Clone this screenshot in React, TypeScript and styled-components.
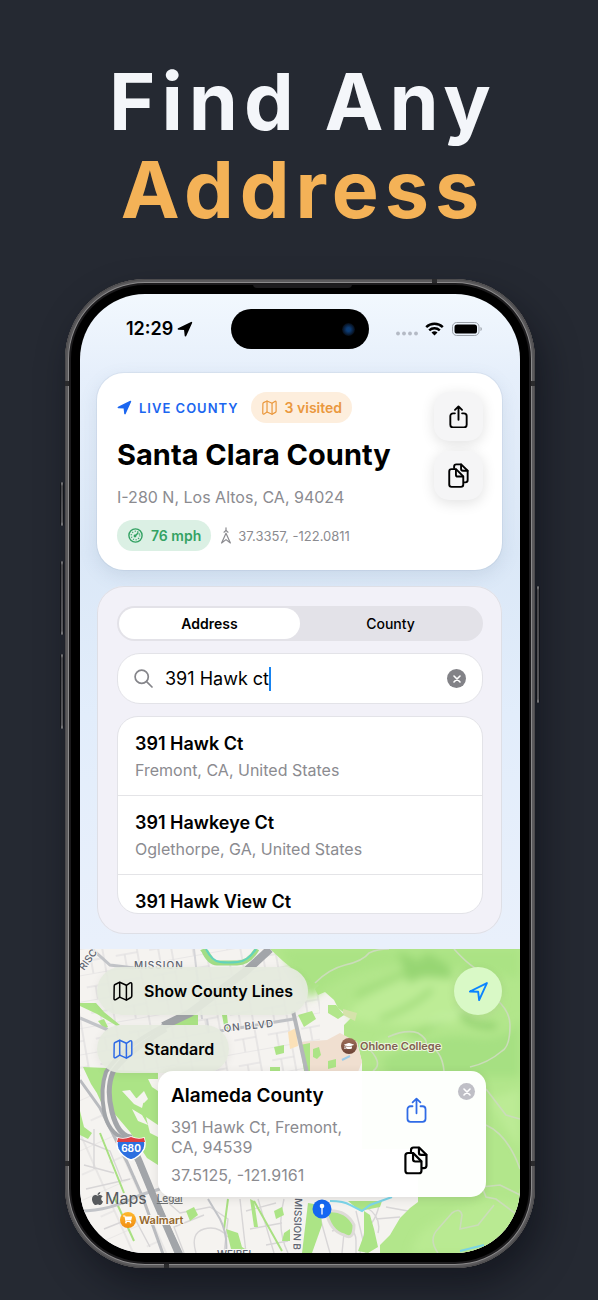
import React, { useState } from "react";
import styled, { createGlobalStyle, css } from "styled-components";
import { FaApple, FaGraduationCap, FaShoppingCart } from "react-icons/fa";

const GlobalStyle = createGlobalStyle`
  *, *::before, *::after { box-sizing: border-box; }
  body {
    margin: 0;
    background: #252932;
    font-family: Inter, "Liberation Sans", sans-serif;
    color: #000;
  }
  button, input { font: inherit; color: inherit; margin: 0; }
  h1, h2, h3, p, ul { margin: 0; padding: 0; font-weight: inherit; }
`;

/* ---------- Page and headline ---------- */

const Page = styled.main`
  display: flex;
  flex-direction: column;
  gap: 46px;
  padding: 57px 63px 32px 65px;
`;

const Headline = styled.h1`
  padding-left: 6px;
  color: #f4f6fa;
  font-size: 79px;
  font-weight: 700;
  line-height: 88px;
  letter-spacing: 6px;
  text-align: center;
  white-space: nowrap;
`;

const Accent = styled.span`
  display: block;
  color: #f4b257;
`;

/* ---------- Device ---------- */

const Device = styled.div`
  position: relative;
  padding: 15px;
  border-radius: 80px;
  background: #000;
  box-shadow:
    inset 0 0 0 1px #4c4b4d,
    inset 0 0 0 3px #5b5a5c,
    inset 0 0 0 4px #8b8a8b,
    inset 0 0 0 6px #1c1b1d,
    8px 18px 34px rgba(8, 10, 18, 0.5);
`;

const SideKey = styled.span<{ $side: "left" | "right"; $top: number; $length: number }>`
  position: absolute;
  ${({ $side }) => $side}: -5px;
  top: ${({ $top }) => $top}px;
  width: 4px;
  height: ${({ $length }) => $length}px;
  border-radius: 2px;
  background: linear-gradient(#98989b, #47474b 4px, #58585c calc(100% - 4px), #98989b);
  border: solid #14161b;
  border-width: 0 1px;
`;

const Speaker = styled.span`
  position: absolute;
  top: 5px;
  left: 40%;
  width: 21%;
  height: 4px;
  border-radius: 0 0 4px 4px;
  background: #1d1c1e;
`;

const Band = styled.span<{ $edge: "left" | "right" | "top" | "bottom"; $at: string }>`
  position: absolute;
  background: #2a2a2c;
  ${({ $edge, $at }) =>
    $edge === "left" || $edge === "right"
      ? css`${$edge}: 0; top: ${$at}; width: 4px; height: 5px;`
      : css`${$edge}: 0; left: ${$at}; width: 5px; height: 4px;`}
`;

const Screen = styled.div`
  position: relative;
  overflow: hidden;
  border-radius: 65px;
  background:
    radial-gradient(ellipse 60% 30% at 100% 100%, #ffffff 30%, rgba(255, 255, 255, 0)),
    linear-gradient(180deg, #f2f8fe 0, #e6effb 80px, #dbe8f7 260px, #e2edfb 420px, #e9f0fb 650px);
`;

const StatusBar = styled.header`
  display: grid;
  grid-template-columns: 1fr auto 1fr;
  align-items: center;
  padding: 15px 38px 24px;
`;

const Clock = styled.div`
  display: flex;
  align-items: center;
  gap: 4px;
  padding-left: 8px;
  font-size: 18px;
  line-height: 24px;
  font-weight: 600;
`;

const Island = styled.div`
  display: flex;
  align-items: center;
  justify-content: flex-end;
  width: 138px;
  height: 40px;
  padding-right: 14px;
  border-radius: 20px;
  background: #000;
`;

const Lens = styled.span`
  width: 13px;
  height: 13px;
  border-radius: 50%;
  background: radial-gradient(circle, #0d3c74 0 20%, #0a2446 45%, #05080d 75%);
`;

const Signals = styled.div`
  display: flex;
  align-items: center;
  justify-content: flex-end;
`;

const Content = styled.div`
  display: flex;
  flex-direction: column;
  gap: 16px;
  padding: 0 18px 15px 17px;
`;

/* ---------- Live county card ---------- */

const LiveCard = styled.section`
  display: flex;
  justify-content: space-between;
  padding: 19px 19px 19px 20px;
  border-radius: 27px;
  background: #fff;
  box-shadow: 0 0 0 1px rgba(120, 140, 170, 0.1), 0 6px 18px rgba(100, 125, 155, 0.16);
`;

const LiveInfo = styled.div`
  display: flex;
  flex-direction: column;
  gap: 12px;
  min-width: 0;
`;

const Line = styled.div<{ $gap: number }>`
  display: flex;
  align-items: center;
  gap: ${({ $gap }) => $gap}px;
  white-space: nowrap;
`;

const LiveTag = styled.span`
  display: flex;
  align-items: center;
  gap: 7px;
  color: #1b66f0;
  font-size: 13px;
  font-weight: 600;
  letter-spacing: 1px;
`;

const Chip = styled.span<{ $tone: "orange" | "green" }>`
  display: flex;
  align-items: center;
  gap: 8px;
  height: 31px;
  padding: 0 10px 0 11px;
  border-radius: 16px;
  font-size: 14px;
  font-weight: 600;
  color: ${({ $tone }) => ($tone === "orange" ? "#ea983d" : "#33a263")};
  background: ${({ $tone }) => ($tone === "orange" ? "#fdeedd" : "#dbf0e4")};
`;

const CountyName = styled.h2`
  font-size: 29px;
  line-height: 40px;
  font-weight: 700;
  white-space: nowrap;
`;

const StreetLine = styled.p`
  color: #8b8b90;
  font-size: 16px;
  line-height: 21px;
  white-space: nowrap;
`;

const Coordinates = styled.span`
  display: flex;
  align-items: center;
  gap: 6px;
  color: #8b8b90;
  font-size: 13px;
`;

const ActionColumn = styled.div`
  display: flex;
  flex-direction: column;
  gap: 10px;
`;

const ActionButton = styled.button`
  display: grid;
  place-items: center;
  width: 49px;
  height: 49px;
  padding: 0;
  border: 0;
  border-radius: 15px;
  background: #f5f5f6;
  box-shadow: 0 3px 14px rgba(0, 0, 0, 0.12);
  cursor: pointer;
`;

/* ---------- Search card ---------- */

const SearchCard = styled.section`
  display: flex;
  flex-direction: column;
  gap: 12px;
  padding: 20px 19px 20px 20px;
  border-radius: 27px;
  background: #f2f1f8;
  box-shadow: inset 0 0 0 1px #dedfe6;
`;

const Segments = styled.div`
  display: grid;
  grid-template-columns: 1fr 1fr;
  height: 35px;
  padding: 2px;
  border-radius: 18px;
  background: #e3e2e8;
`;

const Segment = styled.button<{ $active: boolean }>`
  border: 0;
  padding: 0;
  border-radius: 16px;
  font-size: 14px;
  font-weight: ${({ $active }) => ($active ? 600 : 500)};
  background: ${({ $active }) => ($active ? "#fff" : "transparent")};
  cursor: pointer;
`;

const SearchBox = styled.label`
  display: flex;
  align-items: center;
  height: 51px;
  padding: 0 16px;
  border: 1px solid #e3e3e8;
  border-radius: 23px;
  background: #fff;
`;

const SearchInput = styled.input`
  field-sizing: content;
  min-width: 4px;
  max-width: 240px;
  margin-left: 12px;
  padding: 0;
  border: 0;
  outline: 0;
  background: none;
  font-size: 18px;
  line-height: 24px;
  caret-color: transparent;
`;

const Caret = styled.span`
  width: 2px;
  height: 24px;
  background: #1683f0;
`;

const RoundClose = styled.button<{ $size: number; $color: string }>`
  display: grid;
  place-items: center;
  width: ${({ $size }) => $size}px;
  height: ${({ $size }) => $size}px;
  margin-left: auto;
  padding: 0;
  border: 0;
  border-radius: 50%;
  color: #fff;
  background: ${({ $color }) => $color};
  cursor: pointer;
`;

const Results = styled.ul`
  height: 198px;
  overflow: hidden;
  list-style: none;
  border: 1px solid #e3e3e8;
  border-radius: 21px;
  background: #fff;
`;

const ResultRow = styled.li`
  padding: 14px 17px 12px;
  border-bottom: 1px solid #e4e4e7;
  line-height: 26px;
`;

const ResultTitle = styled.h3`
  font-size: 18px;
  font-weight: 600;
`;

const ResultPlace = styled.p`
  color: #8b8b90;
  font-size: 16px;
`;

/* ---------- Map ---------- */

const MapPanel = styled.section`
  position: relative;
  height: 304px;
  padding: 18px 18px 0 17px;
`;

const MapArt = styled.svg`
  position: absolute;
  inset: 0;
  width: 100%;
  height: 100%;
`;

const MapControls = styled.div`
  position: relative;
  display: flex;
  align-items: flex-start;
  justify-content: space-between;
`;

const PillColumn = styled.div`
  display: flex;
  flex-direction: column;
  align-items: flex-start;
  gap: 10px;
`;

const MapPill = styled.button`
  display: flex;
  align-items: center;
  gap: 11px;
  height: 48px;
  padding: 0 15px 0 16px;
  border: 0;
  border-radius: 24px;
  font-size: 16px;
  font-weight: 600;
  white-space: nowrap;
  background: rgba(228, 234, 222, 0.93);
  box-shadow: 0 2px 10px rgba(0, 0, 0, 0.06);
  cursor: pointer;
`;

const PillIcon = styled.span<{ $color: string }>`
  display: flex;
  color: ${({ $color }) => $color};
`;

const LocateButton = styled.button`
  display: grid;
  place-items: center;
  width: 48px;
  height: 48px;
  padding: 0;
  border: 0;
  border-radius: 50%;
  color: #0a84ff;
  background: #d9f9c6;
  box-shadow: 0 2px 10px rgba(0, 0, 0, 0.08);
  cursor: pointer;
`;

const Callout = styled.article`
  position: absolute;
  left: 78px;
  right: 34px;
  top: 122px;
  display: flex;
  gap: 10px;
  padding: 12px 11px 12px 13px;
  border-radius: 15px;
  background: rgba(255, 255, 255, 0.975);
  box-shadow: 0 2px 10px rgba(0, 0, 0, 0.1);
`;

const CalloutText = styled.div`
  flex: 1;
  color: #8b8b90;
  font-size: 16px;
  line-height: 20px;
`;

const CalloutTitle = styled.h3`
  margin-bottom: 8px;
  color: #000;
  font-size: 19px;
  line-height: 26px;
  font-weight: 600;
  white-space: nowrap;
`;

const CalloutCoordinates = styled.p`
  margin-top: 8px;
`;

const CalloutActions = styled.div`
  display: flex;
  flex-direction: column;
  justify-content: space-between;
  padding: 14px 20px 10px 0;
`;

const PlainButton = styled.button<{ $color: string }>`
  display: grid;
  place-items: center;
  padding: 0;
  border: 0;
  color: ${({ $color }) => $color};
  background: none;
  cursor: pointer;
`;

const Attribution = styled.div`
  position: absolute;
  left: 10px;
  top: 238px;
  display: flex;
  align-items: center;
  gap: 10px;
  color: #56595c;
  font-size: 16px;
  line-height: 22px;
`;

const Brand = styled.span`
  display: flex;
  align-items: center;
`;

const LegalLink = styled.a`
  color: #6d7072;
  font-size: 10px;
  font-weight: 500;
`;

/* ---------- Icons ---------- */

const stroke = {
  fill: "none",
  stroke: "currentColor",
  strokeLinecap: "round" as const,
  strokeLinejoin: "round" as const,
};

const ArrowIcon = ({ size, solid }: { size: number; solid?: boolean }) => (
  <svg width={size} height={size} viewBox="0 0 20 20" {...stroke} strokeWidth={solid ? 2 : 1.8} fill={solid ? "currentColor" : "none"} aria-hidden="true">
    <path d="M1.8 10 18 2l-7.400 16.200-.9-7.900z" />
  </svg>
);

const MapIcon = ({ size, weight = 1.6 }: { size: number; weight?: number }) => (
  <svg width={size} height={size} viewBox="0 0 20 20" {...stroke} strokeWidth={weight} aria-hidden="true">
    <path d="M1.200 4.900c0-.7.300-1.100.9-1.400L6.700 1.300l6.700 3 3.700-2.400c1-.6 1.700-.1 1.700 1v12.200c0 .7-.3 1.100-.9 1.400l-4.500 2.600-6.700-3-3.900 2.500c-1 .6-1.800.1-1.800-.9z" />
    <path d="M6.700 1.500v14.400M13.400 4.500v14.400" />
  </svg>
);

const ShareIcon = ({ width, weight = 2 }: { width: number; weight?: number }) => (
  <svg width={width} height={width * 1.25} viewBox="0 0 20 25" {...stroke} strokeWidth={weight} aria-hidden="true">
    <path d="M6.200 8.800H4.300A2.900 2.900 0 0 0 1.400 11.700v9A2.900 2.900 0 0 0 4.300 23.600h11.400a2.900 2.900 0 0 0 2.900-2.900v-9a2.900 2.900 0 0 0-2.900-2.900h-1.900" />
    <path d="M10 15.500V1.600M6.300 5.100 10 1.500l3.700 3.600" />
  </svg>
);

const CopyIcon = ({ width }: { width: number }) => (
  <svg width={width} height={width * 1.2} viewBox="0 0 22 26.400" {...stroke} strokeWidth="2" aria-hidden="true">
    <path d="M6.400 5.300V3.800a2.400 2.400 0 0 1 2.400-2.400h5l6.800 6.700v9.800a2.400 2.400 0 0 1-2.400 2.400h-1.500" />
    <path d="M13.700 1.600v4.500a2 2 0 0 0 2 2h4.700" />
    <path d="M3.700 6.400h4.700l7.600 7.700v8.500a2.400 2.400 0 0 1-2.400 2.400H3.700a2.400 2.400 0 0 1-2.400-2.400V8.800a2.400 2.400 0 0 1 2.400-2.400z" />
    <path d="M8.300 6.800v5.400a2 2 0 0 0 2 2h5.400" />
  </svg>
);

const GaugeIcon = () => (
  <svg width="15" height="15" viewBox="0 0 15 15" {...stroke} strokeWidth="1.400" aria-hidden="true">
    <circle cx="7.500" cy="7.500" r="6.600" />
    <circle cx="7.500" cy="7.500" r="4.200" strokeDasharray="1 1.640" strokeLinecap="butt" />
    <path d="M6.900 8.200 10 5" />
    <circle cx="7" cy="8" r=".7" fill="currentColor" />
  </svg>
);

const BearingIcon = () => (
  <svg width="12" height="17" viewBox="0 0 12 17" {...stroke} strokeWidth="1.200" aria-hidden="true">
    <path d="M6 .8v3M6 6.200l4.400 9.800L6 12.600 1.600 16z" />
    <path d="M4 5.200 6 3.400l2 1.800" />
  </svg>
);

const SearchIcon = () => (
  <svg width="19" height="19" viewBox="0 0 19 19" {...stroke} stroke="#85858a" strokeWidth="1.700" aria-hidden="true">
    <circle cx="7.700" cy="7.700" r="6.600" />
    <path d="m12.600 12.600 5.400 5.400" />
  </svg>
);

const CrossIcon = ({ size }: { size: number }) => (
  <svg width={size} height={size} viewBox="0 0 8 8" {...stroke} strokeWidth="1.600" aria-hidden="true">
    <path d="m1 1 6 6M7 1 1 7" />
  </svg>
);

const StatusGlyphs = () => (
  <svg width="87" height="16" viewBox="0 0 87 16" fill="none" aria-label="Wi-Fi, battery full">
    <g fill="#b4bac5">
      <circle cx="3" cy="12.500" r="1.900" />
      <circle cx="9" cy="12.500" r="1.900" />
      <circle cx="15" cy="12.500" r="1.900" />
      <circle cx="21" cy="12.500" r="1.900" />
    </g>
    <g stroke="#000" strokeWidth="2.500">
      <path d="M31.200 6.200a12 12 0 0 1 16.600 0" />
      <path d="M34.200 9.300a7.800 7.800 0 0 1 10.600 0" />
    </g>
    <path d="M36.500 11.600a4.400 4.400 0 0 1 6 0l-3 3z" fill="#000" />
    <rect x="57.500" y="1.500" width="26.500" height="13" rx="4.200" stroke="#9aa0a8" />
    <rect x="59.500" y="3.500" width="22.500" height="9" rx="2.600" fill="#000" />
    <path d="M85.500 6v4c.8-.3 1.300-1.100 1.300-2s-.5-1.700-1.300-2z" fill="#9aa0a8" />
  </svg>
);

/* ---------- Map drawing ---------- */

const MapDrawing = () => (
  <MapArt viewBox="0 0 440 304" preserveAspectRatio="xMidYMid slice" role="img" aria-label="Map of Fremont near Mission Boulevard">
    <defs>
      <pattern id="blocks" width="34" height="26" patternUnits="userSpaceOnUse" patternTransform="rotate(-10)">
        <path d="M0 0h34M0 13h22M22 0v26M9 13v13" stroke="#dedcdd" strokeWidth="1.200" fill="none" />
      </pattern>
      <pattern id="lanes" width="30" height="46" patternUnits="userSpaceOnUse" patternTransform="rotate(-24)">
        <path d="M0 0h30M15 0v46M0 23h15" stroke="#e0dedd" strokeWidth="1.200" fill="none" />
      </pattern>
      <filter id="soft" x="-20%" y="-20%" width="140%" height="140%">
        <feGaussianBlur stdDeviation="4" />
      </filter>
      <linearGradient id="school" x2="0" y2="1">
        <stop offset="0" stopColor="#a0705b" />
        <stop offset="1" stopColor="#6b4335" />
      </linearGradient>
      <linearGradient id="shop" x2="0" y2="1">
        <stop offset="0" stopColor="#ffb92e" />
        <stop offset="1" stopColor="#f08c11" />
      </linearGradient>
    </defs>

    <rect width="440" height="304" fill="#f5f3f0" />
    <path d="M0 0H240V122H0z" fill="url(#blocks)" />
    <path d="M0 125 50 215 90 304H0z" fill="url(#lanes)" />

    {/* residential streets in the south */}
    <g stroke="#d8d6d7" strokeWidth="1.400" fill="none">
      <path d="M84 250l16 14 30-6 18 12-4 34M104 304l-10-26 30-12M116 304q-6-20 8-24t24 8M160 250l6 54M166 262l30-8M170 280l32-6M178 250l16 54M204 250q-8 30 4 54M186 296l22-4" />
      <path d="M240 268q6 22 10 36M252 282q24-8 24 10v12M264 284l-2 20M276 262l10 42M286 258q16 10 12 26M300 252q-4 22-14 26l-6 26M306 258l22 4M296 270l24-2" />
      <path d="M0 190l30 12 12 30M4 216l30 8M14 180v40M6 240l44-10M24 280l30-12 16 30M8 272l20 30" />
    </g>

    {/* open hills */}
    <path d="M190 0H440V304H300v-8l10-10 10-17 10-10 8-6V200H282v-87l-5-20-13-3 0-14 7-7-13-10-4-8-9-8-7 3-3-6 4-4-10-3-10-8-16-13z" fill="#b2e68b" />
    <g filter="url(#soft)">
      <path d="M230 50C280 10 330 6 440 30V0H200z" fill="#abe384" />
      <path d="M270 60q60-46 110-34t40 30-60 20-90-6z" fill="#bdec96" />
      <path d="M300 112q50-30 90-24t50-20v60H310z" fill="#a6e082" />
      <path d="M408 150q16 30 32 50v-60z" fill="#bceb95" />
      <path d="M340 284q50-40 100-30v50H330z" fill="#b9ea92" />
      <path d="M276 46q30-12 50-22M300 70q34-12 52-30M330 88q30-14 50-30" stroke="#9cd977" strokeWidth="5" fill="none" />
      <path d="M350 74q30-10 56-30M300 96q20-4 40 0" stroke="#c5f0a2" strokeWidth="5" fill="none" />
      <path d="m318 2 20 10 10-8 20 12 6 14-30-2-16 6z" fill="#97d673" />
      <path d="M380 66q20 14 36 10" stroke="#8fcf6d" strokeWidth="6" fill="none" />
    </g>
    <g stroke="#cbdcba" strokeWidth="1.600" fill="none">
      <path d="M235 34q14-14 30-18 18-4 24-12 8-4 20-4M374 0q18 20 28 22M416 50q14 12 14 26 0 22-8 26-14 12-32 16" />
      <path d="M285 96q20 18 8 26M308 88q18-8 30-4 10 6 8 12M346 96q16 4 18 26M406 140l20 26 14 4M406 176q22 10 34 44" />
      <path d="M358 304q-10-14 0-24l14-16q8-6 10 2l-2 14 18-4 16-20M440 268l-24-18-10-2-4-10 18-2 20 10" />
    </g>

    {/* campus */}
    <path d="M220 93l27-2 13-7 17 9 5 20-4 10h-52z" fill="#f0dfd0" />
    <path d="M220 96l10-2 0 28h-6zM233 100l6-2 2 8-4 4-4-2zM248 112l8-2 0 8-8 2z" fill="#ace486" />
    <path d="M263 60l14 4-2 8-12-6z" fill="#d5e2ab" />
    <path d="M218 66l14-4 4 8-12 8zM248 56l8 0 8 10-6 4-10-6z" fill="#b2e68b" />
    <path d="M208 83l8-4 2 18-8 3z" fill="#fbe1b8" />
    <path d="M262 111l8-4" stroke="#9ccbe8" strokeWidth="2" />

    {/* parks and golf course */}
    <g fill="#ace486">
      <path d="M98 66h20v10H88zM142 66l5 0 2 18-4-2zM18 72l6-2 4 8-4 2zM3 118l24 1-4 20-2 14q-4-10-10-18zM0 54l16 0 8 9 16 13-3 1-20-12-17-8z" />
      <path d="M35 121l43 2v93l-11-7-17-26-17-20-3-24z" />
      <path d="M0 162l4 16 8 6-4 6-8-4zM106 262l8-4 4 8-8 6zM120 1l8 0 8 12-6-2z" />
      <path d="M170 250l4 2 4 26-4 0zM194 262l8-4 2 8-8 4zM204 284l6-4 0 12-8 0z" />
      <path d="M146 280l12 4 4 14 10 6h-20z" />
      <path d="M228 254l12 2 2 20-10 28h-10z" />
      <path d="M284 262l6 4 4 14 4 18-10 6-10-2 6-16z" />
      <path d="M268 252h34l-2 6-20 4z" />
      <path d="M194 98l10-2 0 8-8 2zM190 118l10 0 0 4-10 0z" />
    </g>
    <path d="M246 262q20-2 28 14 0 16-10 10-14-4-18-24z" fill="#ace486" stroke="#dedbd8" strokeWidth="3" />
    <g stroke="#a9e082" fill="none" strokeWidth="2">
      <path d="M34 248l20 44M20 184l24 60M174 252l28 50M148 250l-4 30" />
    </g>
    <path d="M123 0q6 14 14 14t20 0 20-14" stroke="#a2dd86" strokeWidth="5" fill="none" />
    <path d="M126 0q6 12 14 13t18 0 18-13" stroke="#63d3bd" strokeWidth="2" fill="none" />
    <g fill="#f5f4ef">
      <path d="M42 142l8-1 6 8 8 2-2 8-8-4zM56 150l8-8 4 8-4 4zM52 160l10 6 6 10-10-4zM66 168l12 8v12l-8-4zM68 130l10 0v12l-6-4z" />
    </g>
    <path d="M250 252q14 0 20 4l12 6 8-6 22-8" stroke="#7dd6ea" strokeWidth="2" fill="none" />
    <path d="M380 302l24-6M396 304l20-10" stroke="#7ad4e4" strokeWidth="2" />

    {/* roads and freeway */}
    <g stroke="#c2c4c8" fill="none" strokeWidth="3">
      <path d="M12 0l18 16 24 3M0 69l28 12M140 82l74-12" />
      <path d="M213 62l14 62" stroke="#b4b6ba" strokeWidth="4" />
      <path d="M0 131l20 28 27 54 16 36 20 56" stroke="#b9bbbf" />
      <path d="M0 262q30 0 60-16l20-6" />
      <path d="M114 0l8 70M127 70l2 14" stroke="#d5d5d8" strokeWidth="2" />
      <path d="M128 250l12 20q8 16 6 34" strokeWidth="2" />
    </g>
    <g stroke="#a2a5a9" fill="none">
      <path d="M190 0 165 23 110 64 83 77" strokeWidth="8" />
      <path d="M83 77Q40 100 26 123 20 140 24 162T45 190L57 211" strokeWidth="4" />
      <path d="M86 80Q46 104 33 123 26 140 32 163T50 188L57 209 73 246 101 306" strokeWidth="5" />
      <path d="M51 194l8 18 14 34 26 60" strokeWidth="7" />
    </g>

    {/* street names */}
    <g fill="#5e6470" fontSize="10" fontWeight="500" stroke="#f7f6f4" strokeWidth="2" paintOrder="stroke">
      <text transform="translate(4 22) rotate(-54)">RISC</text>
      <text x="54" y="20" letterSpacing="1">MISSION</text>
      <text transform="translate(144 83) rotate(-6)" letterSpacing="1">ON BLVD</text>
      <text transform="translate(215 249) rotate(92)">MISSION B</text>
      <text x="137" y="309">WEIBEL</text>
    </g>

    {/* interstate shield */}
    <path d="M38 189q6 2 13-1 7 3 13 1 2 6 0 11-4 8-13 11-9-3-13-11-2-5 0-11z" fill="#2d6fe0" stroke="#fff" strokeWidth="1.500" />
    <path d="M38 189q6 2 13-1 7 3 13 1l1 4H37z" fill="#dc3e42" />
    <text x="51" y="203" textAnchor="middle" fill="#fff" fontSize="10" fontWeight="700">680</text>

    {/* places */}
    <circle cx="269" cy="97" r="8" fill="url(#school)" />
    <FaGraduationCap x="264" y="92" size={10} color="#fff" />
    <text x="280" y="101" fontSize="11" fontWeight="600" fill="#80604f" stroke="#eaf7dc" strokeWidth="2" paintOrder="stroke">Ohlone College</text>
    <circle cx="48" cy="271" r="8" fill="url(#shop)" />
    <FaShoppingCart x="43" y="266" size={9} color="#fff" />
    <text x="59" y="275" fontSize="11" fontWeight="600" fill="#93662a" stroke="#f9f7f4" strokeWidth="2" paintOrder="stroke">Walmart</text>
    <circle cx="242" cy="260" r="9.500" fill="#1467f2" />
    <circle cx="242" cy="257" r="2.300" fill="#fff" />
    <path d="M242 258v7" stroke="#fff" strokeWidth="1.300" strokeLinecap="round" />
  </MapArt>
);

/* ---------- App ---------- */

const results = [
  { title: "391 Hawk Ct", place: "Fremont, CA, United States" },
  { title: "391 Hawkeye Ct", place: "Oglethorpe, GA, United States" },
  { title: "391 Hawk View Ct" },
];

export default function App() {
  const [mode, setMode] = useState("Address");
  const [query, setQuery] = useState("391 Hawk ct");

  return (
    <>
      <GlobalStyle />
      <Page>
        <Headline>
          Find Any <Accent>Address</Accent>
        </Headline>
        <Device>
          <SideKey $side="left" $top={203} $length={44} />
          <SideKey $side="left" $top={282} $length={74} />
          <SideKey $side="left" $top={375} $length={75} />
          <SideKey $side="right" $top={307} $length={117} />
          <Speaker />
          <Band $edge="left" $at="102px" />
          <Band $edge="right" $at="102px" />
          <Band $edge="top" $at="78%" />
          <Band $edge="left" $at="882px" />
          <Band $edge="right" $at="882px" />
          <Band $edge="bottom" $at="21%" />
          <Screen>
            <StatusBar>
              <Clock>
                12:29 <ArrowIcon size={16} solid />
              </Clock>
              <Island>
                <Lens />
              </Island>
              <Signals>
                <StatusGlyphs />
              </Signals>
            </StatusBar>
            <Content>
              <LiveCard>
                <LiveInfo>
                  <Line $gap={12}>
                    <LiveTag>
                      <ArrowIcon size={15} solid /> LIVE COUNTY
                    </LiveTag>
                    <Chip $tone="orange">
                      <MapIcon size={15} /> 3 visited
                    </Chip>
                  </Line>
                  <CountyName>Santa Clara County</CountyName>
                  <StreetLine>I-280 N, Los Altos, CA, 94024</StreetLine>
                  <Line $gap={9}>
                    <Chip $tone="green">
                      <GaugeIcon /> 76 mph
                    </Chip>
                    <Coordinates>
                      <BearingIcon /> 37.3357, -122.0811
                    </Coordinates>
                  </Line>
                </LiveInfo>
                <ActionColumn>
                  <ActionButton aria-label="Share location">
                    <ShareIcon width={19} />
                  </ActionButton>
                  <ActionButton aria-label="Copy location">
                    <CopyIcon width={21} />
                  </ActionButton>
                </ActionColumn>
              </LiveCard>
              <SearchCard>
                <Segments>
                  {["Address", "County"].map((name) => (
                    <Segment key={name} $active={mode === name} aria-pressed={mode === name} onClick={() => setMode(name)}>
                      {name}
                    </Segment>
                  ))}
                </Segments>
                <SearchBox>
                  <SearchIcon />
                  <SearchInput aria-label="Search" value={query} onChange={(e) => setQuery(e.target.value)} />
                  <Caret />
                  <RoundClose $size={19} $color="#828287" aria-label="Clear search" onClick={() => setQuery("")}>
                    <CrossIcon size={8} />
                  </RoundClose>
                </SearchBox>
                <Results>
                  {results.map(({ title, place }) => (
                    <ResultRow key={title}>
                      <ResultTitle>{title}</ResultTitle>
                      {place && <ResultPlace>{place}</ResultPlace>}
                    </ResultRow>
                  ))}
                </Results>
              </SearchCard>
            </Content>
            <MapPanel>
              <MapDrawing />
              <MapControls>
                <PillColumn>
                  <MapPill>
                    <PillIcon $color="#000">
                      <MapIcon size={20} weight={1.5} />
                    </PillIcon>
                    Show County Lines
                  </MapPill>
                  <MapPill>
                    <PillIcon $color="#2f6be6">
                      <MapIcon size={20} weight={1.5} />
                    </PillIcon>
                    Standard
                  </MapPill>
                </PillColumn>
                <LocateButton aria-label="Centre on my location">
                  <ArrowIcon size={21} />
                </LocateButton>
              </MapControls>
              <Attribution>
                <Brand>
                  <FaApple size={15} /> Maps
                </Brand>
                <LegalLink href="#legal">Legal</LegalLink>
              </Attribution>
              <Callout>
                <CalloutText>
                  <CalloutTitle>Alameda County</CalloutTitle>
                  <p>
                    391 Hawk Ct, Fremont,
                    <br />
                    CA, 94539
                  </p>
                  <CalloutCoordinates>37.5125, -121.9161</CalloutCoordinates>
                </CalloutText>
                <CalloutActions>
                  <PlainButton $color="#2f6be6" aria-label="Share address">
                    <ShareIcon width={21} weight={1.7} />
                  </PlainButton>
                  <PlainButton $color="#000" aria-label="Copy address">
                    <CopyIcon width={24} />
                  </PlainButton>
                </CalloutActions>
                <RoundClose $size={17} $color="#bfbfc6" aria-label="Close">
                  <CrossIcon size={8} />
                </RoundClose>
              </Callout>
            </MapPanel>
          </Screen>
        </Device>
      </Page>
    </>
  );
}
